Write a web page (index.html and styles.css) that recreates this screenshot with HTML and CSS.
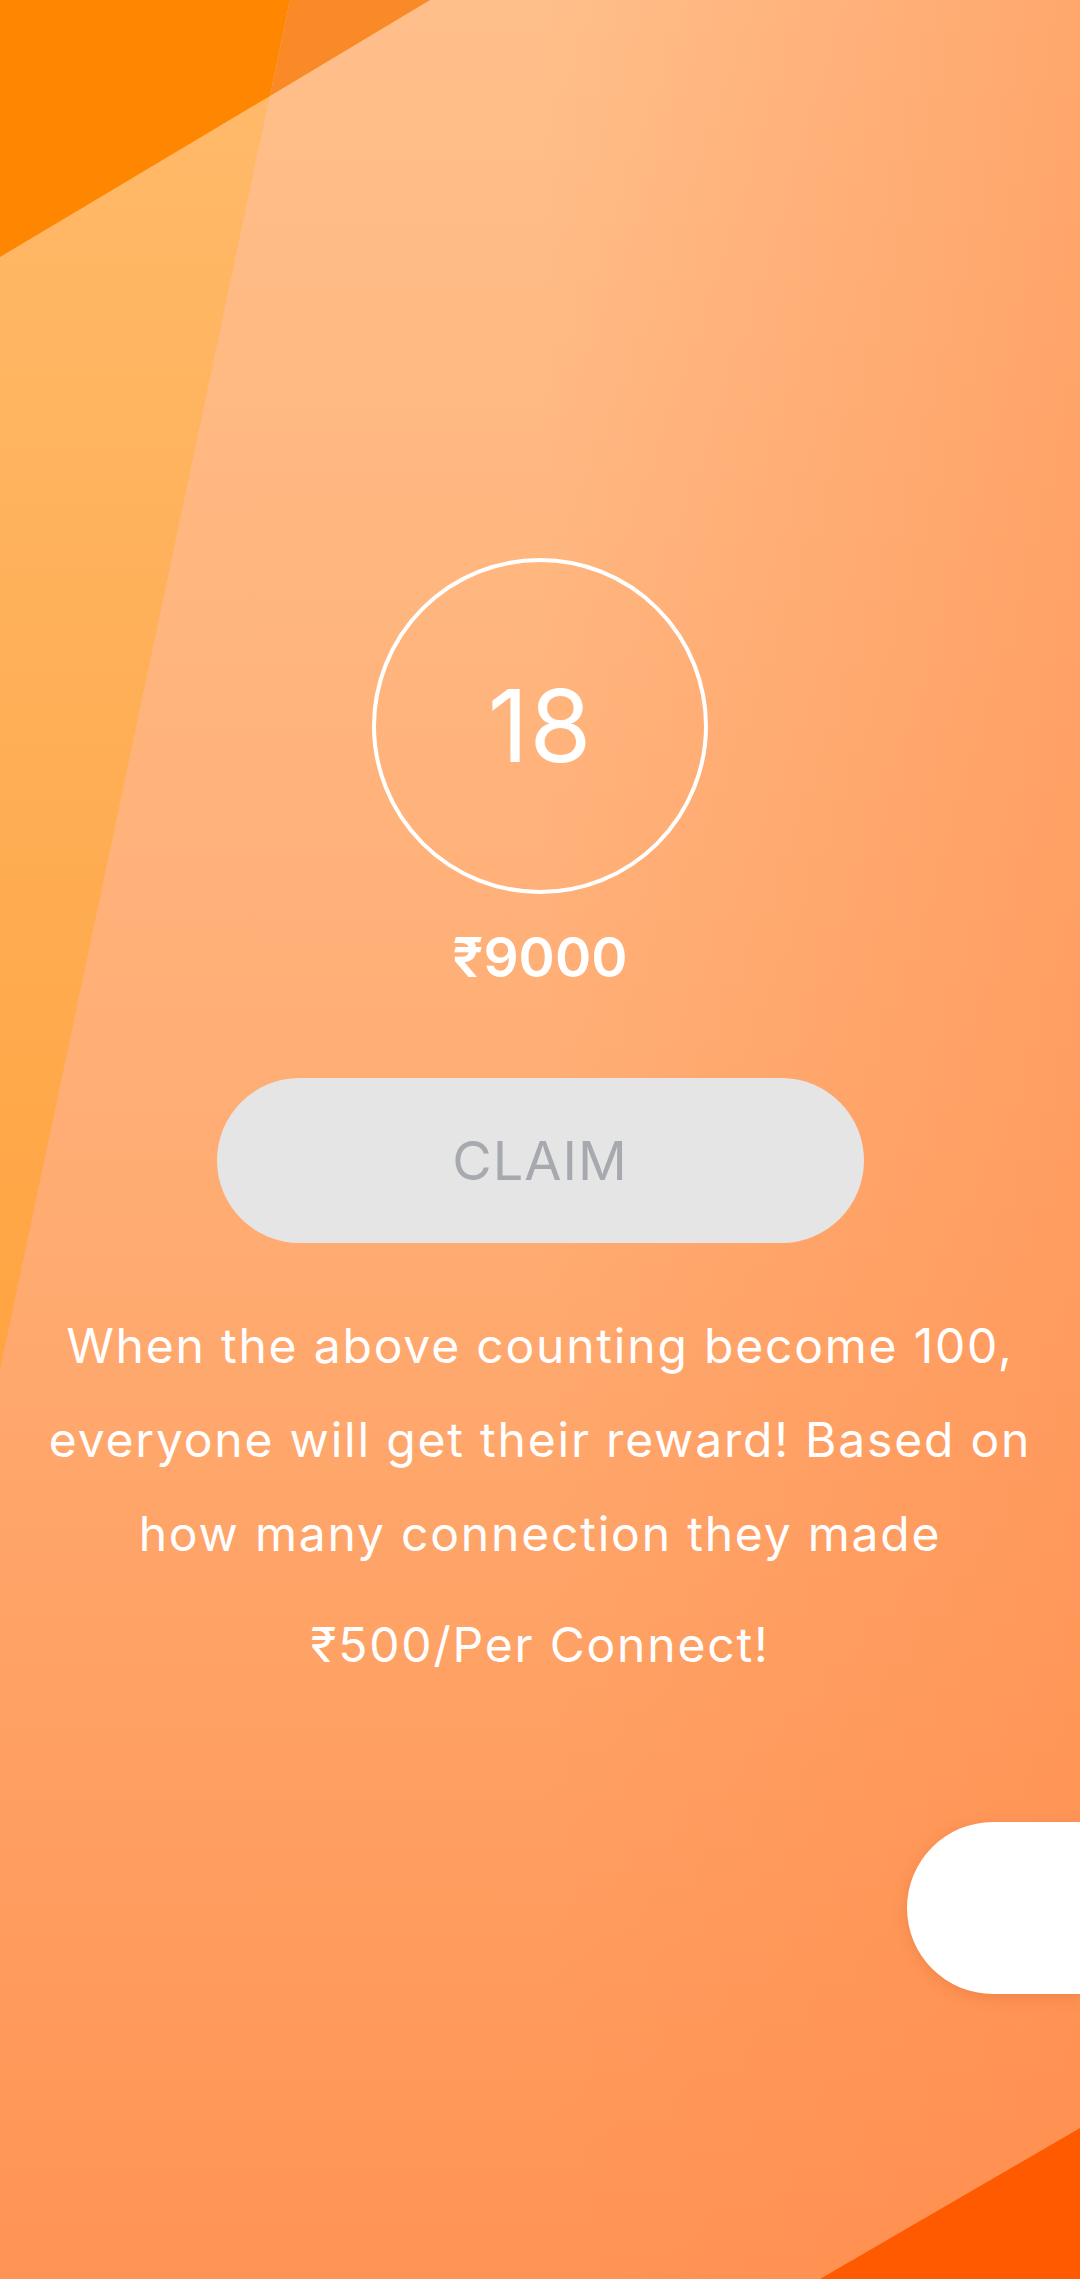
FILE: index.html
```html
<!DOCTYPE html>
<html lang="en">
<head>
<meta charset="utf-8">
<title>Reward</title>
<link rel="stylesheet" href="styles.css">
</head>
<body>
<div class="page">
  <svg class="bg" width="1080" height="2279" viewBox="0 0 1080 2279" xmlns="http://www.w3.org/2000/svg" aria-hidden="true">
    <defs>
      <linearGradient id="gv" x1="0" y1="0" x2="0" y2="1">
        <stop offset="0" stop-color="#FFBF8A"/>
        <stop offset="0.5" stop-color="#FFAD74"/>
        <stop offset="1" stop-color="#FF9454"/>
      </linearGradient>
      <linearGradient id="gh" x1="0" y1="0" x2="1" y2="0">
        <stop offset="0.5" stop-color="#FF8A4A" stop-opacity="0"/>
        <stop offset="1" stop-color="#FF8A4A" stop-opacity="0.45"/>
      </linearGradient>
      <linearGradient id="gs" x1="0" y1="0" x2="0" y2="1">
        <stop offset="0" stop-color="#FFBB6C"/>
        <stop offset="1" stop-color="#FFA442"/>
      </linearGradient>
    </defs>
    <rect width="1080" height="2279" fill="url(#gv)"/>
    <rect width="1080" height="2279" fill="url(#gh)"/>
    <polygon points="0,0 290,0 0,1370" fill="url(#gs)"/>
    <polygon points="0,0 290,0 270,96 0,257" fill="#FF8600"/>
    <polygon points="290,0 430,0 270,96" fill="#F98A27"/>
    <polygon points="1080,2128 1080,2279 820,2279" fill="#FF5A00"/>
  </svg>

  <main class="content">
    <div class="counter">18</div>
    <div class="amount">₹9000</div>
    <button class="claim" type="button">CLAIM</button>
    <p class="desc">When the above counting become 100, everyone will get their reward! Based on how many connection they made</p>
    <p class="rate">₹500/Per Connect!</p>
  </main>

  <div class="tab"></div>
</div>
</body>
</html>
```

FILE: styles.css
```css
html, body {
  margin: 0;
  padding: 0;
}

body {
  width: 1080px;
  height: 2279px;
  overflow: hidden;
  font-family: Inter, "Noto Sans", "Liberation Sans", sans-serif;
}

.page {
  position: relative;
  width: 1080px;
  height: 2279px;
  overflow: hidden;
}

.bg {
  position: absolute;
  left: 0;
  top: 0;
  display: block;
}

.content {
  position: relative;
  display: flex;
  flex-direction: column;
  align-items: center;
  padding-top: 558px;
  color: #fff;
}

.counter {
  width: 336px;
  height: 336px;
  box-sizing: border-box;
  border: 4px solid #fff;
  border-radius: 50%;
  display: flex;
  align-items: center;
  justify-content: center;
  font-size: 100px;
  font-weight: 400;
  line-height: 1;
  letter-spacing: 1px;
}

.amount {
  margin-top: 30px;
  font-size: 55px;
  font-weight: 600;
  line-height: 66px;
}

.claim {
  margin-top: 88px;
  width: 647px;
  height: 165px;
  border: none;
  border-radius: 83px;
  background: #E5E5E5;
  color: #A6AAAF;
  font-family: inherit;
  font-size: 54px;
  font-weight: 400;
  letter-spacing: 1px;
  padding: 0;
}

.desc {
  margin: 56px 0 0;
  width: 1040px;
  text-align: center;
  font-size: 48px;
  line-height: 94px;
  letter-spacing: 1.8px;
}

.rate {
  margin: 17px 0 0;
  font-size: 48px;
  line-height: 94px;
  letter-spacing: 1.8px;
}

.tab {
  position: absolute;
  right: 0;
  top: 1822px;
  width: 173px;
  height: 172px;
  background: #fff;
  border-radius: 86px 0 0 86px;
  box-shadow: 0 4px 14px rgba(200, 90, 30, 0.25);
}
```
